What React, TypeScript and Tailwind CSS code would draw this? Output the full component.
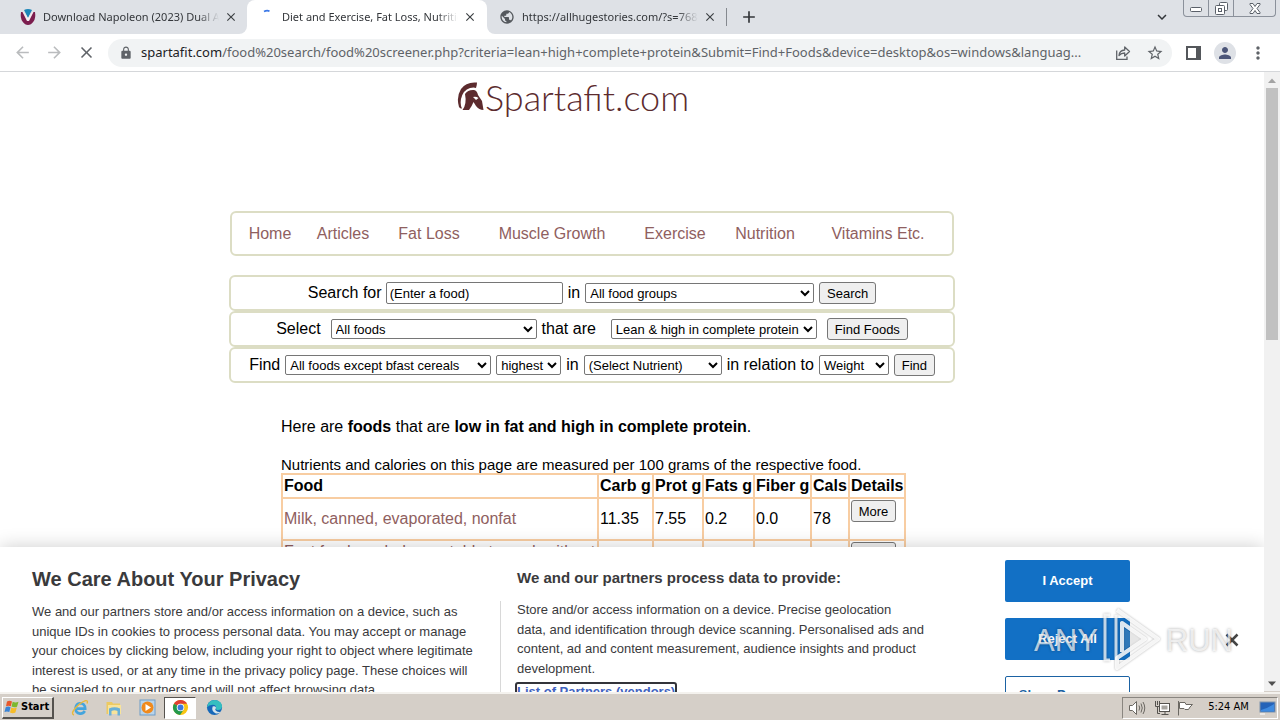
import React from "react";
import {
  MdAdd,
  MdArrowBack,
  MdArrowForward,
  MdClose,
  MdExpandMore,
  MdLock,
  MdMoreVert,
  MdPerson,
  MdPublic,
  MdStarBorder,
} from "react-icons/md";

const UI = "font-['Noto_Sans','Liberation_Sans',sans-serif]";

function Tab({ icon, title, active = false }: { icon: React.ReactNode; title: string; active?: boolean }) {
  return (
    <div
      role="tab"
      aria-selected={active}
      className={
        active
          ? "relative flex h-full w-60 shrink-0 items-center rounded-t-lg bg-white pl-3"
          : "relative flex h-full w-[239px] shrink-0 items-center pl-3"
      }
    >
      {active && (
        <>
          <span className="absolute bottom-0 -left-2 size-2 bg-white">
            <span className="block size-2 rounded-br-lg bg-[#dee1e6]" />
          </span>
          <span className="absolute -right-2 bottom-0 size-2 bg-white">
            <span className="block size-2 rounded-bl-lg bg-[#dee1e6]" />
          </span>
        </>
      )}
      <span className="flex size-4 shrink-0 items-center justify-center">{icon}</span>
      <span className="ml-[7px] w-[176px] overflow-hidden text-[11px] whitespace-nowrap text-[#33363a] [mask-image:linear-gradient(to_right,black_88%,transparent)]">
        {title}
      </span>
      <button aria-label="Close tab" className="ml-1 flex size-4 items-center justify-center text-[#3c4043]">
        <MdClose size={14} />
      </button>
    </div>
  );
}

function TabStrip() {
  return (
    <div className="flex h-[34px] shrink-0 bg-[#dee1e6] pl-2">
      <div role="tablist" className="flex">
        <Tab
          title="Download Napoleon (2023) Dual Audio"
          icon={
            <svg width="16" height="16" viewBox="0 0 16 16">
              <path d="M1 3 Q0 9 2.5 12.5 Q5 16 8 16 Q11 16 13.5 12.5 Q16 9 15 3 L11.5 3 L8 11 L4.500 3Z" fill="#7b1d4e" />
              <path d="M4 1 Q8-1 12 1 L8 9Z" fill="#1c86b8" />
              <path d="M2.500 3 L4.600 3 L8 9.500 L11.400 3 L13.500 3 L9 12 H7Z" fill="#fff" opacity=".9" />
            </svg>
          }
        />
        <Tab
          active
          title="Diet and Exercise, Fat Loss, Nutrition"
          icon={
            <svg width="16" height="16" viewBox="0 0 16 16">
              <path d="M5 2.500 Q8 1 10.500 2.200" stroke="#3b78e7" strokeWidth="1.800" fill="none" />
            </svg>
          }
        />
        <Tab title="https://allhugestories.com/?s=76845" icon={<MdPublic size={16} color="#54585d" />} />
      </div>
      <span className="my-2 w-px bg-[#85898f]" />
      <button aria-label="New tab" className="ml-3 flex items-center text-[#33363a]">
        <MdAdd size={20} />
      </button>
      <button aria-label="Search tabs" className="mr-3 ml-auto flex items-center text-[#33363a]">
        <MdExpandMore size={18} />
      </button>
      <div className="mr-1 flex h-[17px] rounded-b border border-t-0 border-[#8b919b] text-[#5a6069]">
        <button aria-label="Minimize" className="flex w-[25px] items-end justify-center border-r border-[#8b919b] pb-1">
          <svg width="12" height="5" viewBox="0 0 12 5">
            <rect x=".5" y=".5" width="11" height="4" rx="1" fill="#fff" stroke="currentColor" />
          </svg>
        </button>
        <button aria-label="Restore" className="flex w-[25px] items-center justify-center border-r border-[#8b919b]">
          <svg width="13" height="13" viewBox="0 0 13 13" fill="#fff" stroke="currentColor">
            <rect x="4.500" y=".5" width="8" height="8" rx="1" />
            <rect x=".5" y="3.500" width="9" height="9" rx="1" />
            <rect x="3.500" y="6.500" width="3" height="3" />
          </svg>
        </button>
        <button aria-label="Close window" className="flex w-[41px] items-center justify-center">
          <svg width="12" height="11" viewBox="0 0 12 11" fill="#fff" stroke="currentColor">
            <path d="M1 .5H4L6 3.500L8 .5H11V1.500L8 5.500L11 9.500V10.500H8L6 7.500L4 10.500H1V9.500L4 5.500L1 1.500Z" />
          </svg>
        </button>
      </div>
    </div>
  );
}

function Toolbar() {
  return (
    <div className="flex h-[38px] shrink-0 items-center border-b border-[#d5d7da] bg-white pl-3 text-[#5f6368]">
      <button aria-label="Back" className="flex size-5 items-center justify-center text-[#babcbe]">
        <MdArrowBack size={19} />
      </button>
      <button aria-label="Forward" className="ml-3 flex size-5 items-center justify-center text-[#babcbe]">
        <MdArrowForward size={19} />
      </button>
      <button aria-label="Stop" className="ml-3 flex size-5 items-center justify-center">
        <MdClose size={19} />
      </button>
      <div className="ml-3 flex h-7 min-w-0 flex-1 items-center rounded-full bg-[#f1f3f4] pr-2 pl-[11px]">
        <MdLock size={14} className="shrink-0" />
        <div className="ml-2 min-w-0 flex-1 overflow-hidden text-[13px] text-ellipsis whitespace-nowrap text-[#5f6368]">
          <span className="text-[#202124]">spartafit.com</span>
          /food%20search/food%20screener.php?criteria=lean+high+complete+protein&amp;Submit=Find+Foods&amp;device=desktop&amp;os=windows&amp;languag...
        </div>
        <button aria-label="Share" className="ml-[14px] shrink-0">
          <svg width="16" height="16" viewBox="0 0 16 16" fill="none" stroke="currentColor" strokeWidth="1.300">
            <path d="M1.700 5.500V14.300H12V11.500" />
            <path d="M4 10.500Q4.500 5.300 9.700 5V2L14.500 6.500L9.700 11V8Q6 8 4 10.500Z" strokeLinejoin="round" />
          </svg>
        </button>
        <button aria-label="Bookmark" className="ml-[15px] shrink-0">
          <MdStarBorder size={18} />
        </button>
      </div>
      <button aria-label="Side panel" className="ml-[14px]">
        <svg width="15" height="14" viewBox="0 0 15 14" fill="none">
          <rect x="1" y="1" width="13" height="12" stroke="#54575b" strokeWidth="2" />
          <rect x="10" y="1" width="4" height="12" fill="#54575b" />
        </svg>
      </button>
      <button aria-label="Profile" className="ml-[13px] flex size-[22px] items-center justify-center rounded-full bg-[#dee1e6] text-[#4b5578]">
        <MdPerson size={18} />
      </button>
      <button aria-label="Menu" className="mr-3 ml-3">
        <MdMoreVert size={20} />
      </button>
    </div>
  );
}

function Select({ label, value, className }: { label: string; value: string; className: string }) {
  return (
    <select
      aria-label={label}
      className={`h-5 shrink-0 rounded-[2px] border border-[#767676] bg-white text-[13px] text-black ${className}`}
    >
      <option>{value}</option>
    </select>
  );
}

function Button({ children, className = "" }: { children: React.ReactNode; className?: string }) {
  return (
    <button
      className={`h-[22px] shrink-0 rounded-[3px] border border-[#767676] bg-[#efefef] text-[13px] leading-none text-black ${className}`}
    >
      {children}
    </button>
  );
}

const ROW = "flex h-9 items-center justify-center rounded-md border-2 border-[#dcddc4] whitespace-nowrap";

function SearchForms() {
  return (
    <div className="mt-[19px]">
      <form className={ROW}>
        <label htmlFor="food" className="w-[78px]">
          Search for
        </label>
        <input
          id="food"
          defaultValue="(Enter a food)"
          className="mr-[5px] h-[22px] w-[177px] rounded-[2px] border border-[#767676] bg-white px-[3px] text-[13px]"
        />
        <span>in</span>
        <Select label="Food group" value="All food groups" className="mx-[5px] w-[229px]" />
        <Button className="w-[57px]">Search</Button>
      </form>
      <form className={ROW}>
        <span>Select</span>
        <Select label="Foods" value="All foods" className="mr-[5px] ml-[10px] w-[206px]" />
        <span>that are</span>
        <Select label="Criteria" value="Lean & high in complete protein" className="mr-[10px] ml-[15px] w-[206px]" />
        <Button className="w-[81px]">Find Foods</Button>
      </form>
      <form className={`${ROW} gap-[5px]`}>
        <span>Find</span>
        <Select label="Foods to rank" value="All foods except bfast cereals" className="w-[206px]" />
        <Select label="Order" value="highest" className="w-[65px]" />
        <span>in</span>
        <Select label="Nutrient" value="(Select Nutrient)" className="w-[138px]" />
        <span>in relation to</span>
        <Select label="Relation" value="Weight" className="w-[70px]" />
        <Button className="w-[41px]">Find</Button>
      </form>
    </div>
  );
}

const FOODS = [
  { name: "Milk, canned, evaporated, nonfat", values: ["11.35", "7.55", "0.2", "0.0", "78"] },
  { name: "Fast foods, salad, vegetable tossed, without dressing, with chicken", values: ["1.71", "8.0", "1.0", "0.0", "48"] },
];

const CELL = "border-2 border-[#f8cda2] px-px text-left";

function FoodTable() {
  return (
    <table className="w-[625px] table-fixed border-collapse">
      <colgroup>
        <col />
        <col className="w-[55px]" />
        <col className="w-[50px]" />
        <col className="w-[51px]" />
        <col className="w-[57px]" />
        <col className="w-[38px]" />
        <col className="w-[56px]" />
      </colgroup>
      <thead>
        <tr className="h-6 whitespace-nowrap">
          {["Food", "Carb g", "Prot g", "Fats g", "Fiber g", "Cals", "Details"].map((h) => (
            <th key={h} className={`${CELL} leading-5`}>
              {h}
            </th>
          ))}
        </tr>
      </thead>
      <tbody>
        {FOODS.map((f) => (
          <tr key={f.name} className="h-[42px]">
            <td className={`${CELL} leading-[18px]`}>
              <a href="#food" className="text-[#8f6060]">
                {f.name}
              </a>
            </td>
            {f.values.map((v, i) => (
              <td key={i} className={CELL}>
                {v}
              </td>
            ))}
            <td className={`${CELL} align-top`}>
              <Button className="mt-px block w-[45px]">More</Button>
            </td>
          </tr>
        ))}
      </tbody>
    </table>
  );
}

function SitePage() {
  return (
    <div className="pr-20">
      <div className="mx-auto w-[726px] pt-2">
        <a href="#home" className="ml-[228px] flex h-10 w-[236px] text-[#5c2b2e]">
          <svg width="28" height="30" viewBox="0 0 28 30" fill="currentColor" className="mt-[2px] shrink-0">
            <path d="M20 .5Q9-.5 4 7Q-1 15 2 25Q3.500 27 5 26.500Q3 23 4 17Q6 8 13 6Q17 5 19 6Q20 3 20 .5Z" />
            <path d="M8 12Q11 7.500 17 8Q20 8.500 21 13L25 19L26.500 28Q22 28 19 24L16.500 20Q15 24 12 28H5.500Q10 22 8 12Z" />
            <path d="M16 15Q19 14 21.500 16L19 18Z" fill="#fff" />
          </svg>
          <span className="font-['Lato','Liberation_Sans',sans-serif] text-[36px] leading-[34px] font-light">Spartafit.com</span>
        </a>
        <nav className="mx-px mt-[91px] grid h-[45px] grid-cols-[74fr_72fr_100fr_146fr_100fr_80fr_146fr] items-center rounded-md border-2 border-[#dcddc4] px-px text-center whitespace-nowrap text-[#8f6060]">
          {["Home", "Articles", "Fat Loss", "Muscle Growth", "Exercise", "Nutrition", "Vitamins Etc."].map((n) => (
            <a key={n} href="#nav">
              {n}
            </a>
          ))}
        </nav>
        <SearchForms />
        <div className="ml-[52px]">
          <p className="mt-8 leading-6">
            Here are <b>foods</b> that are <b>low in fat and high in complete protein</b>.
          </p>
          <p className="mt-[17px] text-[15px] leading-[17px]">
            Nutrients and calories on this page are measured per 100 grams of the respective food.
          </p>
          <FoodTable />
        </div>
      </div>
    </div>
  );
}

function Watermark() {
  return (
    <div
      aria-hidden="true"
      className="pointer-events-none absolute top-[60px] right-[31px] flex items-center gap-1 text-[31px] leading-none text-white/70 [text-shadow:0_0_3px_rgba(0,0,0,0.35)]"
    >
      <span>ANY</span>
      <svg width="60" height="66" viewBox="0 0 60 66" fill="none" className="drop-shadow-[0_0_1px_rgba(0,0,0,0.35)]">
        <path d="M8 8H3V53H8M14 8V53" stroke="#fff" strokeOpacity=".75" strokeWidth="3" />
        <path d="M15 3L56 32L15 61V51L43 32L20 16V45" stroke="#fff" strokeOpacity=".85" strokeWidth="4" strokeLinejoin="round" />
        <path d="M22 21L38 32L22 43Z" fill="#bbb" fillOpacity=".18" />
      </svg>
      <span>RUN</span>
    </div>
  );
}

function PrivacyBanner() {
  return (
    <section
      aria-label="Privacy"
      className="absolute inset-x-0 bottom-0 h-[145px] bg-white shadow-[0_0_18px_rgba(0,0,0,0.2)]"
    >
      <div className="flex h-full overflow-hidden pl-8 text-[13px] leading-normal text-[#3a3a3c]">
        <div className="w-[468px] shrink-0 pt-5">
          <h2 className="text-[20px] leading-6 font-bold">We Care About Your Privacy</h2>
          <p className="mt-[11px] whitespace-nowrap">
            We and our partners store and/or access information on a device, such as
            <br />
            unique IDs in cookies to process personal data. You may accept or manage
            <br />
            your choices by clicking below, including your right to object where legitimate
            <br />
            interest is used, or at any time in the privacy policy page. These choices will
            <br />
            be signaled to our partners and will not affect browsing data.
          </p>
        </div>
        <div className="mt-[54px] w-px shrink-0 bg-[#d8d8d8]" />
        <div className="min-w-0 flex-1 pt-[21px] pl-4">
          <h3 className="text-[15px] leading-5 font-bold">We and our partners process data to provide:</h3>
          <p className="mt-3 whitespace-nowrap">
            Store and/or access information on a device. Precise geolocation
            <br />
            data, and identification through device scanning. Personalised ads and
            <br />
            content, ad and content measurement, audience insights and product
            <br />
            development.
          </p>
          <a
            href="#vendors"
            className="mt-1 -ml-0.5 inline-block rounded-[3px] border-2 border-[#33343a] leading-4 font-bold whitespace-nowrap text-[#3f62c0]"
          >
            List of Partners (vendors)
          </a>
        </div>
        <div className="flex w-[125px] shrink-0 flex-col gap-4 pt-[13px] font-bold">
          <button className="h-[42px] shrink-0 rounded-[2px] bg-[#1270c5] text-white">I Accept</button>
          <button className="h-[42px] shrink-0 rounded-[2px] bg-[#1270c5] text-white">Reject All</button>
          <button className="h-[38px] shrink-0 rounded-[2px] border border-[#1b62a3] text-[#1b62a3]">Show Purposes</button>
        </div>
        <button aria-label="Close" className="mr-6 ml-[94px] self-start pt-[86px]">
          <svg width="16" height="14" viewBox="0 0 16 14" stroke="#444" strokeWidth="2.500">
            <path d="M2.500 1.500L13.500 12.500M13.500 1.500L2.500 12.500" />
          </svg>
        </button>
      </div>
      <Watermark />
    </section>
  );
}

function Scrollbar() {
  return (
    <div className="flex w-4 shrink-0 flex-col items-center bg-[#f1f1f1]">
      <svg width="16" height="16" viewBox="0 0 16 16" fill="#a3a3a3">
        <path d="M4 11L8 6.500L12 11Z" />
      </svg>
      <div className="h-[252px] w-3 bg-[#c1c1c1]" />
      <svg width="16" height="16" viewBox="0 0 16 16" fill="#505050" className="mt-auto">
        <path d="M4 5.500L8 10L12 5.500Z" />
      </svg>
    </div>
  );
}

function Taskbar() {
  return (
    <div className="flex h-7 shrink-0 items-center border-t-2 border-[#f4f2ee] bg-[#d5cfc8] px-0.5 pt-px text-[12px] text-black shadow-[0_-1px_0_#d5cfc8]">
      <button className="flex h-[22px] w-[52px] items-center gap-px border-t border-r-2 border-b-2 border-l border-t-white border-r-[#55524e] border-b-[#55524e] border-l-white pl-px font-['DejaVu_Sans_Condensed','DejaVu_Sans',sans-serif] text-[11px] font-bold">
        <svg width="16" height="16" viewBox="0 0 16 16">
          <path d="M3 2.500Q5.500 1 8 2.500L6.800 7.300Q4.500 6 2 7.300Z" fill="#e8582a" />
          <path d="M8.700 2.800Q11.500 4.200 14.500 2.800L13 7.800Q10.500 9 7.500 7.600Z" fill="#7cb82f" />
          <path d="M1.700 8.200Q4.200 7 6.600 8.200L5.300 13Q3 11.800 .5 13Z" fill="#3a84d6" />
          <path d="M7.300 8.500Q10 9.800 12.800 8.600L11.400 13.500Q8.800 14.800 6 13.400Z" fill="#f6bc28" />
        </svg>
        Start
      </button>
      <div className="ml-[9px] flex items-center">
        <button aria-label="Internet Explorer" className="flex w-[34px] justify-center">
          <svg width="18" height="18" viewBox="0 0 18 18" fill="none">
            <path d="M13.800 12Q12 15 8.800 14.600Q4.500 14 4.500 9.300Q5 4.800 9 4.300Q14 4.500 14.200 9.600H6" stroke="#45a5dd" strokeWidth="2.600" />
            <path d="M3 16Q-.5 15 4 9.500Q9 3.500 14 1.800Q17.500 1 16 4.500" stroke="#e9b93b" strokeWidth="1.400" />
          </svg>
        </button>
        <button aria-label="File Explorer" className="flex w-[34px] justify-center">
          <svg width="18" height="18" viewBox="0 0 18 18">
            <path d="M1.500 3H7L8 4.500H15V15H1.500Z" fill="#ecca62" />
            <path d="M3 6H16V15H3Z" fill="#f8e39a" />
            <path d="M4 9.500Q9.500 7 15 9.500V16.500H12.500V12Q9.500 10.500 6.500 12V16.500H4Z" fill="#68b0d8" />
          </svg>
        </button>
        <button aria-label="Media Player" className="flex w-[34px] justify-center">
          <svg width="18" height="18" viewBox="0 0 18 18">
            <rect x="1" y="1" width="15" height="15" fill="#b9d4ea" stroke="#6e9dc8" />
            <circle cx="8.500" cy="8.500" r="6" fill="#f08a1d" />
            <path d="M6.500 5L12 8.500L6.500 12Z" fill="#fff" />
          </svg>
        </button>
        <button aria-label="Chrome" className="-ml-px mr-px flex h-[22px] w-8 items-center justify-center border border-t-[#55524e] border-r-white border-b-white border-l-[#55524e] bg-white">
          <svg width="17" height="17" viewBox="0 0 18 18">
            <circle cx="9" cy="9" r="8" fill="#f9c513" />
            <path d="M9 9L2.070 5A8 8 0 0 1 15.930 5H9Z" fill="#df3f33" />
            <path d="M9 9L2.070 5A8 8 0 0 0 8.500 17L12.500 11Z" fill="#23994d" />
            <circle cx="9" cy="9" r="4" fill="#fff" />
            <circle cx="9" cy="9" r="3.100" fill="#3b78dc" />
          </svg>
        </button>
        <button aria-label="Edge" className="flex w-[34px] justify-center">
          <svg width="17" height="17" viewBox="0 0 18 18">
            <circle cx="9" cy="9" r="8" fill="#1768b8" />
            <path d="M1 9Q2 1 9.500 1Q17 2 17 8Q16.500 12 12 11.700Q10 11.500 10.700 9.700Q11 6.500 7.500 6.200Q3 6 1 9Z" fill="#35bfc0" />
            <path d="M7 8Q5.500 13 10 15Q13 16 16 13.500Q13 14.500 10.500 12.500Q9 11 10.700 9.200Q9.500 7 7 8Z" fill="#d5e4ec" />
          </svg>
        </button>
      </div>
      <div className="ml-auto flex h-[22px] w-[156px] items-center border border-t-[#8a8680] border-r-white border-b-white border-l-[#8a8680] pr-px pl-1.5">
        <svg width="17" height="16" viewBox="0 0 17 16" fill="none" stroke="#6b6862">
          <path d="M.5 5.500H3.500L7.500 1.500V14.500L3.500 10.500H.5Z" fill="#fff" />
          <path d="M10 5.500Q11.500 8 10 10.500M12 3.500Q14.500 8 12 12.500M14 2Q17.500 8 14 14" />
        </svg>
        <svg width="17" height="16" viewBox="0 0 17 16" fill="none" stroke="#55524e" className="ml-2">
          <rect x="5.500" y="3.500" width="10" height="8" fill="#fff" />
          <rect x="7.500" y="5.500" width="6" height="4" fill="#a7a49f" stroke="none" />
          <path d="M7.500 14.500H14.500M11 12V14" />
          <path d="M1.500 1V6.500H5.500V1M3.500 1V5M3.500 6.500V13.500H6" />
        </svg>
        <svg width="17" height="16" viewBox="0 0 17 16" fill="#fff" stroke="#6b6862" className="ml-[6px]">
          <path d="M1.500 1V15.500" />
          <path d="M2.500 2.500H8L9 4.500H15.500L13 7L11.500 9.500H8L7 8.500H2.500Z" />
        </svg>
        <span className="mr-auto ml-auto pl-1 font-['DejaVu_Sans_Condensed','DejaVu_Sans',sans-serif] text-[11px] whitespace-nowrap">5:24 AM</span>
        <svg width="17" height="14" viewBox="0 0 17 14">
          <rect x="1" y="1" width="15" height="10" fill="#2563b8" stroke="#7f93ab" />
          <path d="M2 9Q8 8 15 3V10.500H2Z" fill="#3f8be0" />
          <path d="M1 13H6" stroke="#fff" />
        </svg>
      </div>
    </div>
  );
}

export default function App() {
  return (
    <div className={`flex h-screen flex-col overflow-hidden bg-white ${UI}`}>
      <TabStrip />
      <Toolbar />
      <div className="flex min-h-0 flex-1">
        <main className="relative min-w-0 flex-1 overflow-hidden font-['Liberation_Sans',Arial,sans-serif] text-[16px] text-black">
          <SitePage />
          <PrivacyBanner />
        </main>
        <Scrollbar />
      </div>
      <Taskbar />
    </div>
  );
}
